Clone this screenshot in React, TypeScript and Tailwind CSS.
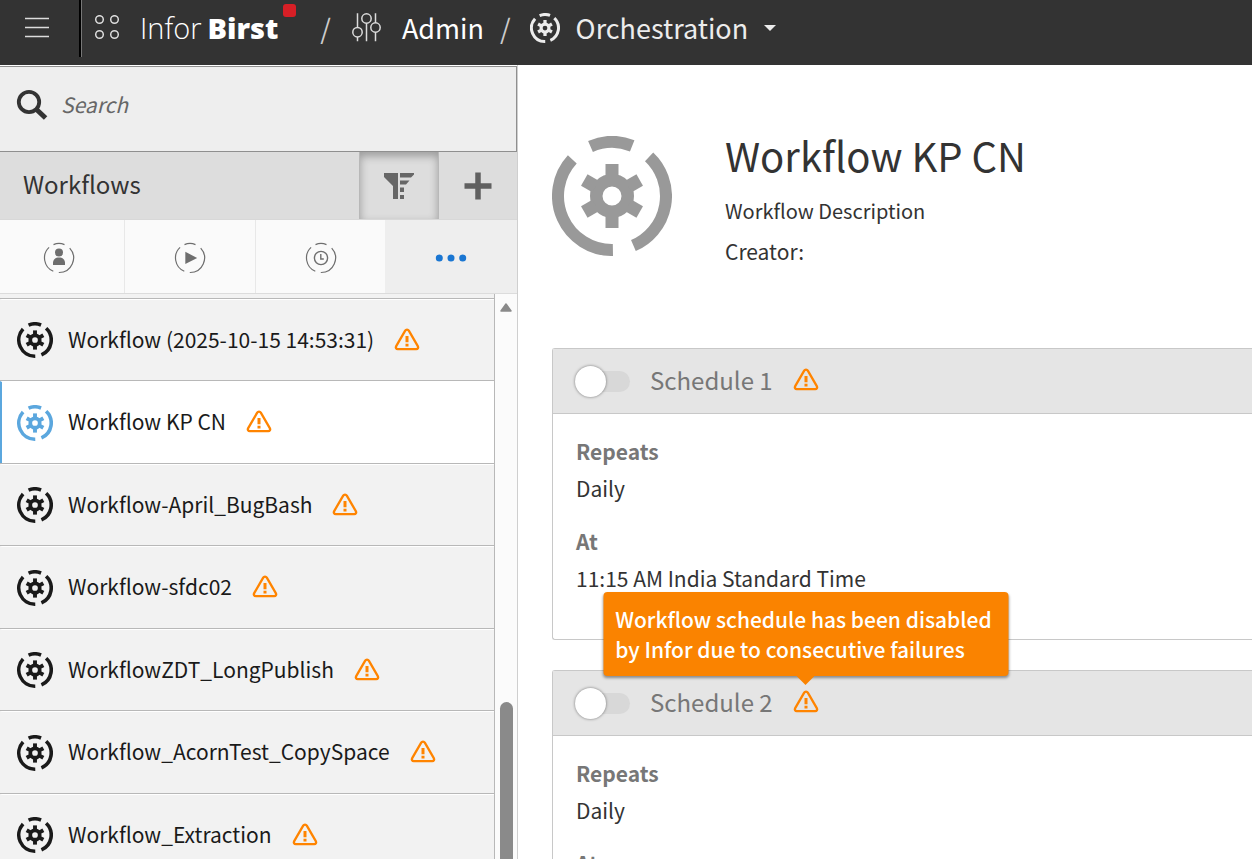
import type { ReactNode } from "react";
import clsx from "clsx";

interface Workflow {
  name: string;
  selected?: boolean;
}

interface Schedule {
  name: string;
  repeats: string;
  at: string;
  message?: string;
}

const workflows: Workflow[] = [
  { name: "Workflow (2025-10-15 14:53:31)" },
  { name: "Workflow KP CN", selected: true },
  { name: "Workflow-April_BugBash" },
  { name: "Workflow-sfdc02" },
  { name: "WorkflowZDT_LongPublish" },
  { name: "Workflow_AcornTest_CopySpace" },
  { name: "Workflow_Extraction" },
];

const schedules: Schedule[] = [
  { name: "Schedule 1", repeats: "Daily", at: "11:15 AM India Standard Time" },
  {
    name: "Schedule 2",
    repeats: "Daily",
    at: "11:15 AM India Standard Time",
    message: "Workflow schedule has been disabled by Infor due to consecutive failures",
  },
];

const OrchestrationIcon = ({ className }: { className?: string }) => (
  <svg viewBox="0 0 120 120" className={clsx("shrink-0", className)} aria-hidden="true">
    <g fill="none" stroke="currentColor" strokeWidth="12">
      <path d="M38.5 10.5A54 54 0 0 1 80.2 9.9" />
      <path d="M97.1 20.8A54 54 0 0 1 81.4 109.6" />
      <path d="M60.9 114A54 54 0 0 1 20.3 23.4" />
      <circle cx="60" cy="60" r="15.75" strokeWidth="12.5" />
    </g>
    {[0, 60, 120, 180, 240, 300].map((angle) => (
      <rect
        key={angle}
        x="53.5"
        y="28"
        width="13"
        height="13"
        fill="currentColor"
        transform={`rotate(${angle} 60 60)`}
      />
    ))}
  </svg>
);

const WarningIcon = () => (
  <svg width="26" height="24" viewBox="0 0 26 24" className="shrink-0" aria-hidden="true">
    <path
      d="M11.2 2.6 2.2 18.1C1.3 19.6 2.1 21.1 3.8 21.1H22.2C23.9 21.1 24.7 19.6 23.8 18.1L14.8 2.6C14 1.2 12 1.2 11.2 2.6Z"
      fill="none"
      stroke="#ff8400"
      strokeWidth="2.3"
      strokeLinejoin="round"
    />
    <path d="M11.5 8h3v6.2h-3zM11.5 15.7h3v2.8h-3z" fill="#ff8400" />
  </svg>
);

// Thin broken ring shared by the quick filter tabs
const RingIcon = ({ children }: { children: ReactNode }) => (
  <svg width="32" height="32" viewBox="0 0 32 32" className="text-[#6e6e6e]" aria-hidden="true">
    <g fill="none" stroke="currentColor" strokeWidth="1.2">
      <path d="M10.5 2.6A14.5 14.5 0 0 1 21.5 2.6" />
      <path d="M26.7 6.2A14.5 14.5 0 0 1 15.8 30.5" />
      <path d="M6.1 5.4A14.5 14.5 0 0 0 10.3 29.3" />
    </g>
    {children}
  </svg>
);

const Header = () => (
  <header className="flex h-[65px] shrink-0 items-start bg-[#333333] text-white">
    <button
      aria-label="Menu"
      className="flex h-[57px] w-[82px] shrink-0 items-center justify-center border-r border-[#777777] pr-2 pb-0.5 shadow-[inset_-2px_0_0_#000000]"
    >
      <svg width="24" height="22" viewBox="0 0 24 22" aria-hidden="true">
        <path d="M0 1.5h24M0 10.5h24M0 19.5h24" stroke="#dcdcdc" strokeWidth="1.4" />
      </svg>
    </button>
    <div className="flex h-14 items-center">
      <button aria-label="Applications" className="ml-3">
        <svg width="26" height="26" viewBox="0 0 26 26" fill="none" stroke="#dcdcdc" strokeWidth="1.5" aria-hidden="true">
          <circle cx="5.5" cy="4.5" r="3.8" />
          <circle cx="20.5" cy="4.5" r="3.8" />
          <circle cx="5.5" cy="19.5" r="3.8" />
          <circle cx="20.5" cy="19.5" r="3.8" />
        </svg>
      </button>
      <a href="#home" className="relative ml-5 flex items-center gap-1.5 font-['Open_Sans'] text-[29px] leading-[36px]">
        <span className="font-light">Infor</span>
        <span className="font-extrabold">Birst</span>
        <span className="absolute -top-1.5 -right-[18px] size-[13px] rounded-[3px] bg-[#d71f26]" />
      </a>
      <span className="ml-[42px] text-[27px] text-[#cccccc]">/</span>
      <a href="#admin" className="ml-[21px] flex items-center gap-5 text-[27px]">
        <svg width="30" height="30" viewBox="0 0 30 30" fill="none" stroke="#dcdcdc" strokeWidth="1.5" aria-hidden="true">
          <circle cx="5.5" cy="19.2" r="4.7" />
          <circle cx="14.5" cy="5.5" r="4.7" />
          <circle cx="23.5" cy="14.5" r="4.7" />
          <path d="M5.5 0.2v14.3M5.5 23.9v4.3M14.5 10.2v18M23.5 0.2v9.600M23.5 19.200v9" />
        </svg>
        Admin
      </a>
      <span className="ml-4 text-[27px] text-[#cccccc]">/</span>
      <button className="ml-[19px] flex items-center gap-4 text-[27px] text-[#ececec]">
        <OrchestrationIcon className="size-[30px]" />
        Orchestration
        <svg width="12" height="6" viewBox="0 0 12 6" aria-hidden="true">
          <path d="M0 0h12L6 6z" fill="#ececec" />
        </svg>
      </button>
    </div>
  </header>
);

const filters = [
  {
    label: "Owner",
    icon: (
      <RingIcon>
        <circle cx="16" cy="10.5" r="4" fill="currentColor" />
        <path d="M10 23v-2c0-3.6 2.4-5.6 6-5.6s6 2 6 5.6v2z" fill="currentColor" />
      </RingIcon>
    ),
  },
  {
    label: "Running",
    icon: (
      <RingIcon>
        <path d="M11.3 9.8 23.2 16l-11.9 6z" fill="currentColor" />
      </RingIcon>
    ),
  },
  {
    label: "Scheduled",
    icon: (
      <RingIcon>
        <circle cx="16" cy="16" r="6.6" fill="none" stroke="currentColor" strokeWidth="1.4" />
        <path d="M15.8 12v5h3" fill="none" stroke="currentColor" strokeWidth="1.4" />
      </RingIcon>
    ),
  },
];

const Sidebar = () => (
  <aside className="flex w-[518px] shrink-0 flex-col border-r border-[#cfcfcf]">
    <label className="mt-px flex h-[86px] shrink-0 items-center gap-[13px] border border-l-0 border-[#8f8f8f] bg-[#eeeeee] pb-2 pl-4">
      <svg width="32" height="32" viewBox="0 0 32 32" fill="none" stroke="#333333" aria-hidden="true">
        <circle cx="13" cy="13" r="10.2" strokeWidth="3.8" />
        <path d="m20 20 9.6 9" strokeWidth="5" />
      </svg>
      <input
        type="search"
        aria-label="Search"
        placeholder="Search"
        className="min-w-0 flex-1 bg-transparent text-[21px] italic outline-none placeholder:text-[#666666]"
      />
    </label>

    <div className="flex h-[68px] shrink-0 items-stretch border-b border-[#d8d8d8] bg-[#dddddd]">
      <h2 className="flex flex-1 items-center pb-[3px] pl-[23px] text-[24px] text-[#333333]">Workflows</h2>
      <button
        aria-label="Filter"
        className="flex w-20 items-center justify-center border-x border-[#b8b8b8] shadow-[inset_0_4px_8px_rgba(0,0,0,0.3)]"
      >
        <svg width="30" height="26" viewBox="0 0 30 26" fill="#666666" aria-hidden="true">
          <path d="M0 0h14v26H9V13L0 4z" />
          <path d="M16 0h14v1.5L27 4.5H16zM16 7.5h9.5L22 11.5h-6zM16 14.5h4v4.5h-4zM16 22h4v4h-4z" />
        </svg>
      </button>
      <button aria-label="Add workflow" className="flex w-[78px] items-center justify-center">
        <svg width="28" height="28" viewBox="0 0 28 28" aria-hidden="true">
          <path d="M14 0.5v27M0.5 14h27" stroke="#606060" strokeWidth="5.5" />
        </svg>
      </button>
    </div>

    <div className="grid h-[74px] shrink-0 grid-cols-[125px_131px_129px_1fr] border-b border-[#dcdcdc]">
      {filters.map(({ label, icon }, index) => (
        <button
          key={label}
          aria-label={label}
          className={clsx(
            "flex items-center justify-center bg-[#fafafa] pt-[3px]",
            index === 0 && "pr-1.5",
            index < 2 && "border-r border-[#e8e8e8]"
          )}
        >
          {icon}
        </button>
      ))}
      <button aria-label="More" className="flex items-center justify-center bg-[#eeeeee] pt-[3px]">
        <svg width="32" height="8" viewBox="0 0 32 8" fill="#1a76d2" aria-hidden="true">
          <circle cx="4.3" cy="4" r="3.5" />
          <circle cx="16" cy="4" r="3.5" />
          <circle cx="27.7" cy="4" r="3.5" />
        </svg>
      </button>
    </div>

    <div className="flex min-h-0 flex-1">
      <ul className="flex-1 overflow-hidden border-r border-[#b8b8b8] bg-[#f2f2f2] pt-1">
        {workflows.map(({ name, selected }) => (
          <li key={name} className="border-t border-[#b8b8b8] odd:h-[82px] even:h-[83px]">
            <button
              className={clsx(
                "flex h-full w-full items-center gap-[15px] border-t border-l-2 border-t-white pl-[15px] text-left text-[21px] text-[#1a1a1a]",
                selected ? "border-l-[#5ba7de] bg-white" : "border-l-transparent"
              )}
            >
              <OrchestrationIcon className={clsx("size-9", selected && "text-[#5ba7de]")} />
              <span className="flex items-center gap-5 pb-px">
                {name}
                <WarningIcon />
              </span>
            </button>
          </li>
        ))}
      </ul>
      <div className="flex w-[22px] flex-col items-center bg-[#fbfbfb] pt-[9px]" aria-hidden="true">
        <svg width="12" height="9" viewBox="0 0 12 9">
          <path d="M6 1 11 8H1z" fill="#8a8a8a" stroke="#8a8a8a" strokeWidth="1.5" strokeLinejoin="round" />
        </svg>
        <div className="mt-[390px] w-[13px] flex-1 rounded-t-full bg-[#8a8a8a]" />
      </div>
    </div>
  </aside>
);

const ScheduleCard = ({ name, repeats, at, message }: Schedule) => (
  <section className="rounded-l-[3px] border border-r-0 border-[#c8c8c8]">
    <div className="flex h-[65px] items-center border-b border-[#c8c8c8] bg-[#e5e5e5] pl-[22px]">
      <input
        type="checkbox"
        aria-label={`Enable ${name}`}
        className="relative h-[21px] w-[55px] shrink-0 appearance-none rounded-full bg-[#d8d8d8] before:absolute before:-top-[5px] before:left-0 before:size-[31px] before:rounded-full before:bg-white before:shadow-[0_0_3px_rgba(0,0,0,0.5)] checked:before:left-6"
      />
      <div className="ml-5 flex items-center gap-5 pb-[3px]">
        <h2 className="text-[24px] text-[#777777]">{name}</h2>
        <div className="relative">
          <WarningIcon />
          {message && (
            <div
              role="tooltip"
              className="absolute bottom-full left-1/2 mb-[14px] w-[405px] -translate-x-1/2 rounded-[4px] bg-[#fa8300] p-3 text-[21px] leading-[30px] font-medium text-white shadow-[0_2px_3px_rgba(0,0,0,0.4)]"
            >
              {message}
              <svg width="18" height="9" viewBox="0 0 18 9" className="absolute top-full left-1/2 -translate-x-1/2" aria-hidden="true">
                <path d="M0 0h18L9 9z" fill="#fa8300" />
              </svg>
            </div>
          )}
        </div>
      </div>
    </div>
    <dl className="px-[23px] pt-[19px] pb-[42px] text-[21px] leading-[37px] text-[#333333]">
      <dt className="font-bold text-[#777777]">Repeats</dt>
      <dd className="mb-4">{repeats}</dd>
      <dt className="font-bold text-[#777777]">At</dt>
      <dd>{at}</dd>
    </dl>
  </section>
);

export default function App() {
  return (
    <div className="flex h-screen flex-col overflow-hidden bg-white font-['Noto_Sans_CJK_SC',sans-serif]">
      <Header />
      <div className="flex min-h-0 flex-1">
        <Sidebar />
        <main className="min-w-0 flex-1 overflow-hidden pl-[34px]">
          <div className="flex gap-[53px] pt-[71px] text-[#333333]">
            <OrchestrationIcon className="size-[120px] text-[#999999]" />
            <div className="leading-10">
              <h1 className="mb-[17px] text-[40px] leading-[38px]">Workflow KP CN</h1>
              <p className="text-[20px]">Workflow Description</p>
              <p className="text-[21px]">Creator:</p>
            </div>
          </div>
          <div className="mt-[77px] flex flex-col gap-[30px]">
            {schedules.map((schedule) => (
              <ScheduleCard key={schedule.name} {...schedule} />
            ))}
          </div>
        </main>
      </div>
    </div>
  );
}
